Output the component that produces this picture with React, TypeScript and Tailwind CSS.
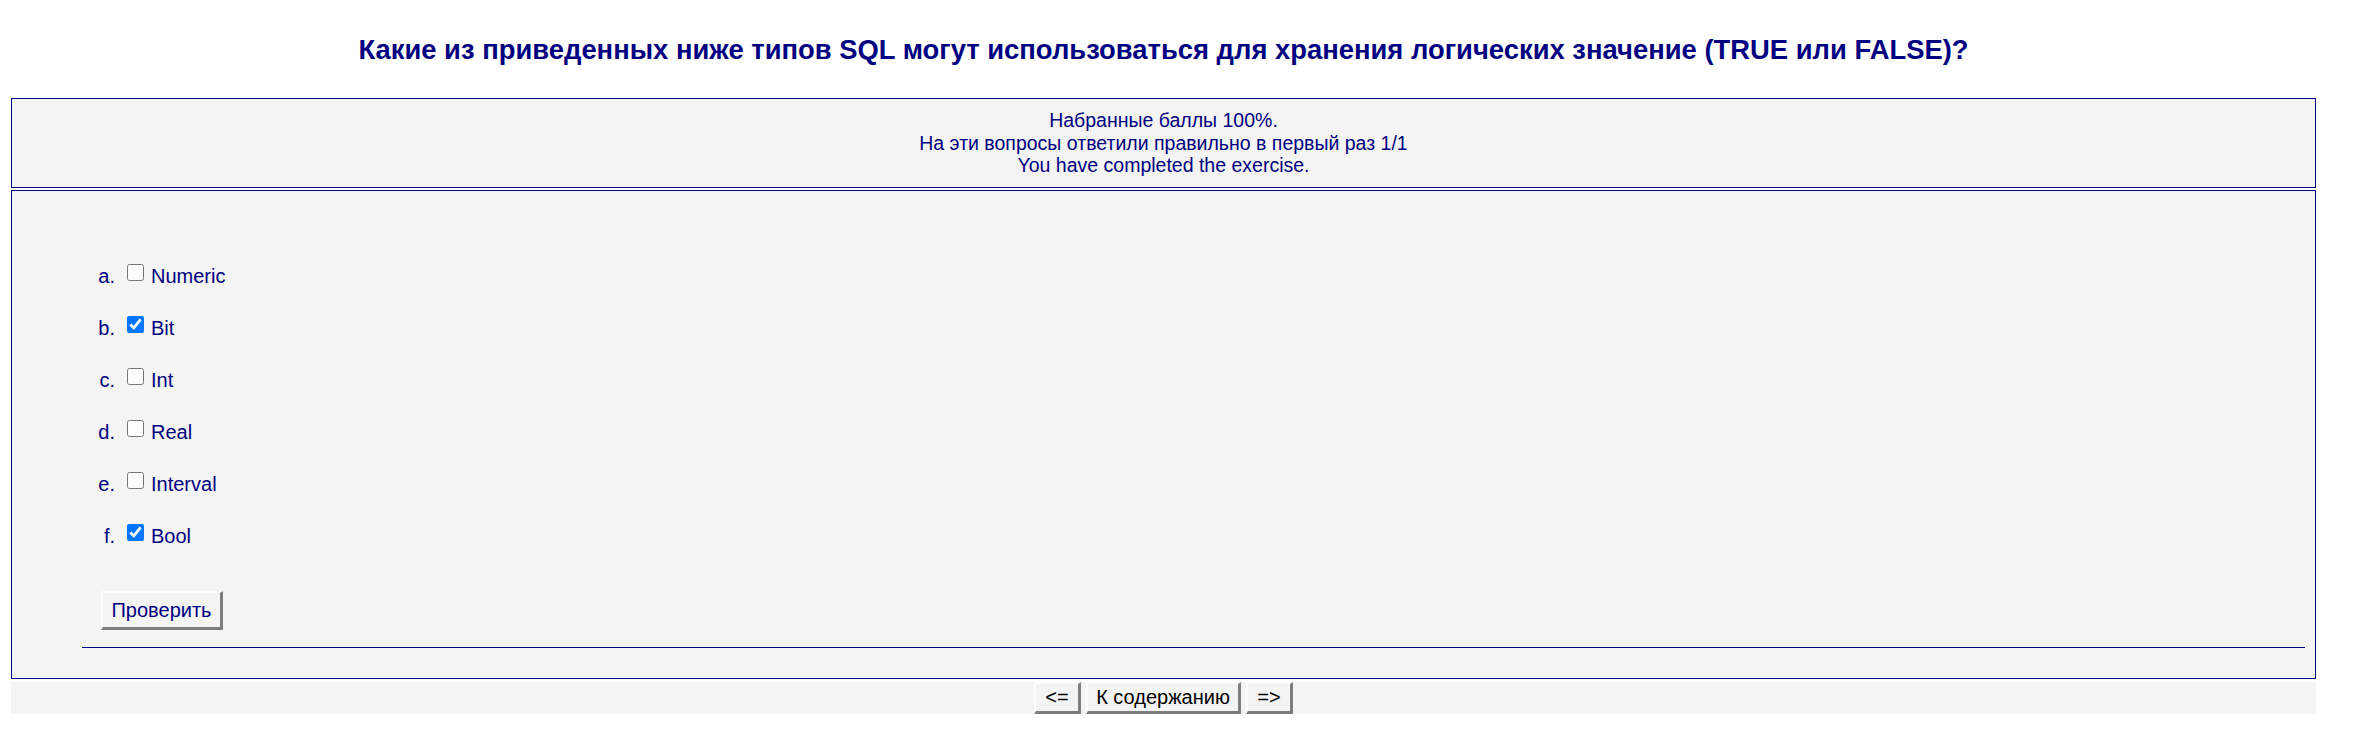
const options = [
  { key: 'a.', label: 'Numeric', checked: false },
  { key: 'b.', label: 'Bit', checked: true },
  { key: 'c.', label: 'Int', checked: false },
  { key: 'd.', label: 'Real', checked: false },
  { key: 'e.', label: 'Interval', checked: false },
  { key: 'f.', label: 'Bool', checked: true },
]

function OldButton({ children, className = '' }: { children: React.ReactNode; className?: string }) {
  return (
    <button
      type="button"
      className={`border-t-2 border-l-2 border-r-[3px] border-b-[3px] border-t-[#fcfcfc] border-l-[#fcfcfc] border-r-[#7d7d7d] border-b-[#7d7d7d] bg-[#f4f4f4] text-[20px] leading-[23px] ${className}`}
    >
      {children}
    </button>
  )
}

export default function App() {
  return (
    <div className="min-h-screen bg-white font-['Liberation_Sans',Arial,sans-serif]">
      <div className="ml-[11px] w-[2305px]">
        <h2 className="pt-[33px] text-center text-[27.4px] font-bold leading-[33px] text-[#000080]">
          Какие из приведенных ниже типов SQL могут использоваться для хранения логических значение (TRUE или FALSE)?
        </h2>

        <div className="mt-[32px] h-[90px] border border-[#000080] bg-[#f4f4f4] pt-[10px] text-center text-[19.5px] leading-[22.5px] text-[#000080]">
          <div>Набранные баллы 100%.</div>
          <div>На эти вопросы ответили правильно в первый раз 1/1</div>
          <div>You have completed the exercise.</div>
        </div>

        <div className="mt-[2px] h-[489px] border border-[#000080] bg-[#f4f4f4] pt-[73px] text-[#000080]">
          <div className="flex flex-col gap-[28px]">
            {options.map((o) => (
              <div key={o.key} className="flex h-[24px] items-start text-[20px] leading-[24px]">
                <span className="w-[103px] text-right">{o.key}</span>
                <input
                  type="checkbox"
                  defaultChecked={o.checked}
                  className="ml-[12px] h-[17px] w-[17px]"
                />
                <span className="ml-[7px]">{o.label}</span>
              </div>
            ))}
          </div>

          <div className="mt-[43px] pl-[89px]">
            <OldButton className="h-[39px] w-[122px] text-[#000080]">Проверить</OldButton>
          </div>

          <div className="ml-[70px] mr-[10px] mt-[17px] border-t border-[#000080]" />
        </div>

        <div className="mt-[3px] flex h-[32px] justify-center gap-[5px] bg-[#f4f4f4]">
          <OldButton className="h-[32px] w-[47px] text-black">&lt;=</OldButton>
          <OldButton className="h-[32px] w-[155px] text-black">К содержанию</OldButton>
          <OldButton className="h-[32px] w-[47px] text-black">=&gt;</OldButton>
        </div>
      </div>
    </div>
  )
}
